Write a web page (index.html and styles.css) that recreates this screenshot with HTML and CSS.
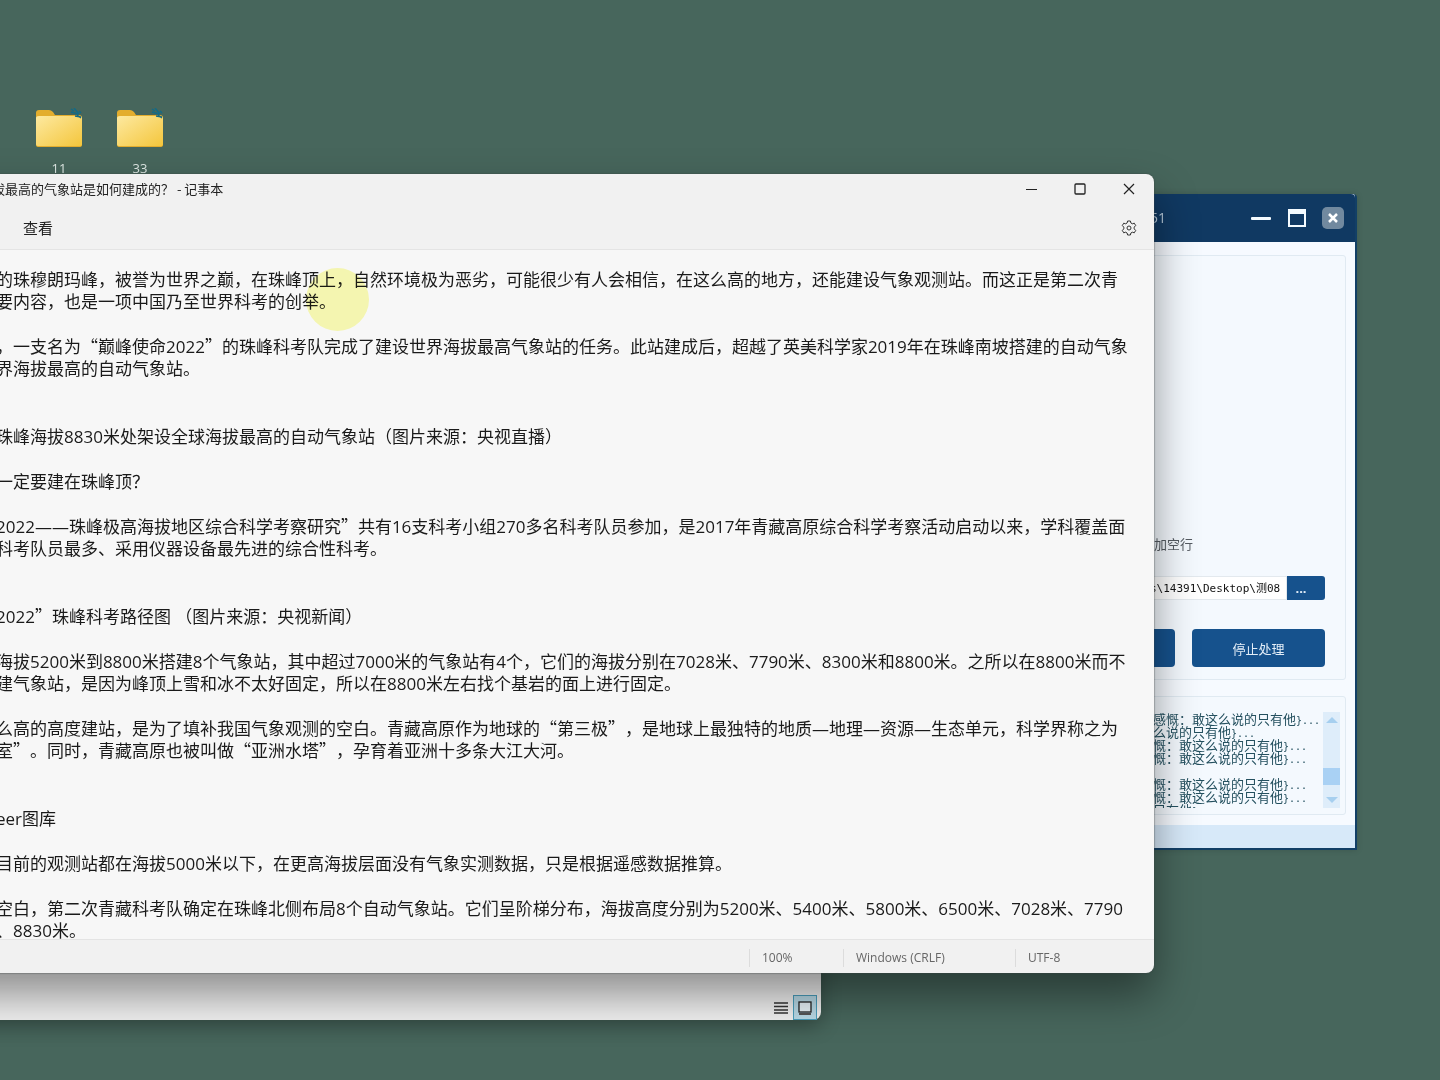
FILE: index.html
```html
<!DOCTYPE html>
<html lang="zh-CN">
<head>
<meta charset="utf-8">
<title>记事本</title>
<link rel="stylesheet" href="styles.css">
</head>
<body>
<main class="desktop">
  <nav class="icons">
    <a class="icon" href="#">
      <svg width="48" height="40" viewBox="0 0 48 40" aria-hidden="true">
        <defs><linearGradient id="fold" x1="0" y1="0" x2="1" y2="1"><stop offset="0" stop-color="#fde9a0"/><stop offset="1" stop-color="#f4c63c"/></linearGradient></defs>
        <path d="M1 5q0-3 3-3h10q2 0 4 2l2 3h24q3 0 3 3v27q0 2-3 2H4q-3 0-3-2z" fill="#e3ad2d"/>
        <path d="M1 10q0-2 3-2h40q3 0 3 2v26q0 2-3 2H4q-3 0-3-2z" fill="url(#fold)"/>
        <path d="M36 1l3 2M39 0l5 6M36 4l7 2M42 7l4 3M44 3l2 2M40 8l6 1" stroke="#146a86" stroke-width="1.500"/>
      </svg>
      <span>11</span>
    </a>
    <a class="icon" href="#">
      <svg width="48" height="40" viewBox="0 0 48 40" aria-hidden="true">
        <path d="M1 5q0-3 3-3h10q2 0 4 2l2 3h24q3 0 3 3v27q0 2-3 2H4q-3 0-3-2z" fill="#e3ad2d"/>
        <path d="M1 10q0-2 3-2h40q3 0 3 2v26q0 2-3 2H4q-3 0-3-2z" fill="url(#fold)"/>
        <path d="M36 1l3 2M39 0l5 6M36 4l7 2M42 7l4 3M44 3l2 2M40 8l6 1" stroke="#146a86" stroke-width="1.500"/>
      </svg>
      <span>33</span>
    </a>
  </nav>

  <section class="window app">
    <header class="app-title">
      <span class="app-name">51</span>
      <button class="app-btn" aria-label="最小化"><svg width="20" height="20" viewBox="0 0 20 20"><rect x="0" y="9" width="20" height="3" rx="1" fill="#f4fbff"/></svg></button>
      <button class="app-btn" aria-label="最大化"><svg width="18" height="18" viewBox="0 0 18 18"><path d="M0 0h18v18H0zM2 5v11h14V5z" fill="#f4fbff" fill-rule="evenodd"/></svg></button>
      <button class="app-btn close" aria-label="关闭"><svg width="10" height="10" viewBox="0 0 10 10"><path d="M1 1l8 8M9 1l-8 8" stroke="#fff" stroke-width="2.500"/></svg></button>
    </header>
    <div class="app-body">
      <div class="panel options">
        <span class="option">加空行</span>
        <div class="path-row">
          <input class="path" type="text" value="s\14391\Desktop\测08" aria-label="路径">
          <button class="primary browse" aria-label="浏览">...</button>
        </div>
        <div class="action-row">
          <button class="primary start" aria-label="开始处理"></button>
          <button class="primary stop">停止处理</button>
        </div>
      </div>
      <div class="panel log-panel">
        <div class="log">
          <div>感慨：敢这么说的只有他<span>}...</span></div>
          <div>么说的只有他<span>}...</span></div>
          <div>慨：敢这么说的只有他<span>}...</span></div>
          <div>慨：敢这么说的只有他<span>}...</span></div>
          <div><br></div>
          <div>慨：敢这么说的只有他<span>}...</span></div>
          <div>慨：敢这么说的只有他<span>}...</span></div>
          <div>只有他<span>}</span></div>
        </div>
        <div class="scroll">
          <svg width="12" height="6" viewBox="0 0 12 6"><path d="M6 0l6 6H0z" fill="#a6cfef"/></svg>
          <div class="thumb"></div>
          <svg width="12" height="6" viewBox="0 0 12 6"><path d="M0 0h12L6 6z" fill="#a6cfef"/></svg>
        </div>
      </div>
    </div>
    <footer class="app-status"></footer>
  </section>

  <section class="window explorer">
    <button class="view" aria-label="详细信息"><svg width="14" height="12" viewBox="0 0 14 12"><path d="M0 1h14M0 4.500h14M0 8h14M0 11h14" stroke="#333" stroke-width="1.500"/></svg></button>
    <button class="view active" aria-label="大图标"><svg width="14" height="14" viewBox="0 0 14 14"><rect x="1" y="1" width="12" height="10" fill="#e8f3f8" stroke="#222" stroke-width="1.300"/><path d="M1 13h12" stroke="#555" stroke-width="2"/></svg></button>
  </section>

  <section class="window notepad">
    <header class="title-bar">
      <h1>拔最高的气象站是如何建成的？ - 记事本</h1>
      <button class="caption" aria-label="最小化"><svg width="12" height="12" viewBox="0 0 12 12"><path d="M1 6.500h11" stroke="#222"/></svg></button>
      <button class="caption" aria-label="最大化"><svg width="12" height="12" viewBox="0 0 12 12"><rect x="1" y="1" width="10" height="10" rx="1" fill="none" stroke="#222" stroke-width="1.300"/></svg></button>
      <button class="caption" aria-label="关闭"><svg width="12" height="12" viewBox="0 0 12 12"><path d="M1 1l10 10M11 1L1 11" stroke="#222" stroke-width="1.200"/></svg></button>
    </header>
    <div class="menu-bar">
      <button class="menu">查看</button>
      <button class="caption" aria-label="设置"><svg width="16" height="16" viewBox="0 0 16 16" fill="none" stroke="#333" stroke-linejoin="round"><path d="M6.600 1h2.800l.5 2 1.400.8 2-.6 1.400 2.400-1.500 1.500v1.800l1.500 1.500-1.400 2.400-2-.6-1.400.8-.5 2H6.600l-.5-2-1.400-.8-2 .6-1.400-2.400 1.500-1.500V7.100L1.300 5.600l1.400-2.400 2 .6L6.100 3z"/><circle cx="8" cy="8" r="2"/></svg></button>
    </div>
    <div class="editor" role="textbox" aria-multiline="true" aria-label="文本编辑器" contenteditable="true" spellcheck="false">
      <p>的珠穆朗玛峰，被誉为世界之巅，在珠峰顶上，自然环境极为恶劣，可能很少有人会相信，在这么高的地方，还能建设气象观测站。而这正是第二次青<br>要内容，也是一项中国乃至世界科考的创举。</p>
      <p class="wide">，一支名为<span class="quote">“</span>巅峰使命2022<span class="quote">”</span>的珠峰科考队完成了建设世界海拔最高气象站的任务。此站建成后，超越了英美科学家2019年在珠峰南坡搭建的自动气象<br>界海拔最高的自动气象站。</p>
      <p>珠峰海拔8830米处架设全球海拔最高的自动气象站（图片来源：央视直播）</p>
      <p>一定要建在珠峰顶？</p>
      <p class="wide">2022——珠峰极高海拔地区综合科学考察研究<span class="quote">”</span>共有16支科考小组270多名科考队员参加，是2017年青藏高原综合科学考察活动启动以来，学科覆盖面<br>科考队员最多、采用仪器设备最先进的综合性科考。</p>
      <p>2022<span class="quote">”</span>珠峰科考路径图 （图片来源：央视新闻）</p>
      <p>海拔5200米到8800米搭建8个气象站，其中超过7000米的气象站有4个，它们的海拔分别在7028米、7790米、8300米和8800米。之所以在8800米而不<br>建气象站，是因为峰顶上雪和冰不太好固定，所以在8800米左右找个基岩的面上进行固定。</p>
      <p class="wide">么高的高度建站，是为了填补我国气象观测的空白。青藏高原作为地球的<span class="quote">“</span>第三极<span class="quote">”</span>，是地球上最独特的地质—地理—资源—生态单元，科学界称之为<br>室<span class="quote">”</span>。同时，青藏高原也被叫做<span class="quote">“</span>亚洲水塔<span class="quote">”</span>，孕育着亚洲十多条大江大河。</p>
      <p>eer图库</p>
      <p>目前的观测站都在海拔5000米以下，在更高海拔层面没有气象实测数据，只是根据遥感数据推算。</p>
      <p>空白，第二次青藏科考队确定在珠峰北侧布局8个自动气象站。它们呈阶梯分布，海拔高度分别为5200米、5400米、5800米、6500米、7028米、7790<br>、8830米。</p>
    </div>
    <footer class="status-bar">
      <span class="zoom">100%</span>
      <span class="eol">Windows (CRLF)</span>
      <span class="encoding">UTF-8</span>
    </footer>
  </section>
  <div class="pointer"></div>
</main>
</body>
</html>
```

FILE: styles.css
```css
* { box-sizing: border-box; }
body {
  margin: 0;
  font-family: "Noto Sans CJK SC", sans-serif;
  text-spacing-trim: space-all;
}
button {
  border: 0;
  padding: 0;
  background: none;
  font: inherit;
  color: inherit;
  display: flex;
  align-items: center;
  justify-content: center;
}
.desktop {
  position: relative;
  min-height: 100vh;
  overflow: hidden;
  background: #47665c;
}
.icons {
  display: flex;
  gap: 33px;
  padding: 108px 0 0 35px;
}
.icon {
  display: flex;
  flex-direction: column;
  align-items: center;
  gap: 10px;
  width: 48px;
  color: #dfe8e4;
  font: 13px/20px "Open Sans", sans-serif;
  text-decoration: none;
}
.window {
  position: absolute;
  display: flex;
  flex-direction: column;
}

.app {
  left: 1100px;
  top: 194px;
  width: 257px;
  height: 656px;
  border: solid #123f66;
  border-width: 0 2px 2px 0;
  border-radius: 4px 4px 0 0;
  background: #f6faff;
  box-shadow: 0 0 6px rgba(0, 0, 0, .15);
}
.app-title {
  display: flex;
  align-items: center;
  gap: 14px;
  height: 48px;
  padding-right: 11px;
  border-radius: 4px 4px 0 0;
  background: #103962;
}
.app-name {
  flex: 1;
  padding-left: 50px;
  color: #b8cadb;
  font: 14px/20px "Open Sans", sans-serif;
}
.app-btn { width: 22px; height: 22px; }
.close { border-radius: 5px; background: #71899f; }
.app-body {
  flex: 1;
  display: flex;
  flex-direction: column;
  gap: 16px;
  padding: 13px 9px 10px 0;
}
.panel {
  border: 1px solid #e0eaf2;
  border-radius: 3px;
  background: #f4f9fe;
}
.options {
  flex: 1;
  display: flex;
  flex-direction: column;
  justify-content: flex-end;
  padding: 0 20px 12px 0;
}
.option {
  padding-left: 53px;
  margin-bottom: 22px;
  color: #555b62;
  font-size: 13px;
  line-height: 20px;
}
.path-row { display: flex; margin-bottom: 29px; }
.path {
  flex: 1;
  min-width: 0;
  height: 24px;
  border: 1px solid #e3e9ee;
  background: #fff;
  padding: 0 0 2px 48px;
  color: #111;
  font: 11px "DejaVu Sans Mono", "Noto Sans CJK SC", monospace;
}
.primary { background: #16528d; color: #e3eef8; }
.browse {
  width: 38px;
  border-radius: 0 3px 3px 0;
  padding-right: 10px;
  font: bold 13px "Open Sans", sans-serif;
}
.action-row { display: flex; justify-content: flex-end; gap: 17px; }
.action-row .primary { height: 38px; border-radius: 4px; font-size: 13px; }
.start { flex: 1; }
.stop { width: 133px; }
.log-panel {
  display: flex;
  height: 119px;
  padding: 15px 5px 6px 0;
}
.log {
  flex: 1;
  overflow: hidden;
  padding-left: 52px;
  color: #24505f;
  font-size: 13px;
  line-height: 13px;
  white-space: nowrap;
}
.log div { height: 13px; }
.log span { font: 10px/13px "DejaVu Sans Mono", monospace; }
.scroll {
  display: flex;
  flex-direction: column;
  align-items: center;
  width: 17px;
  padding: 5px 0;
  background: #deedfa;
}
.thumb { width: 17px; height: 17px; margin: auto 0 12px; background: #a9d1f4; }
.app-status { height: 23px; background: #d7e9f9; }

.explorer {
  left: -120px;
  top: 900px;
  width: 941px;
  height: 120px;
  flex-direction: row;
  justify-content: flex-end;
  align-items: flex-end;
  padding-right: 4px;
  border-radius: 0 0 8px 8px;
  background: #f1f1f1;
  box-shadow: 0 6px 20px rgba(0, 0, 0, .3);
}
.view { width: 24px; height: 25px; border: 1px solid transparent; }
.active { border-color: #4b9fbd; background: #b9dae7; }

.notepad {
  left: -120px;
  top: 174px;
  width: 1274px;
  height: 799px;
  overflow: hidden;
  border-radius: 8px;
  background: #f1f1f1;
  box-shadow: 0 0 1px 1px rgba(60, 70, 70, .3), 0 22px 44px rgba(0, 0, 0, .42);
}
.title-bar, .menu-bar { display: flex; align-items: center; padding-right: 1px; }
.title-bar { height: 30px; }
.title-bar h1 {
  flex: 1;
  margin: 0;
  padding-left: 112px;
  font-size: 13px;
  font-weight: 400;
  line-height: 20px;
  color: #222;
  white-space: nowrap;
}
.caption { width: 49px; height: 30px; }
.menu-bar {
  height: 46px;
  justify-content: space-between;
  padding-top: 3px;
  border-bottom: 1px solid #e4e4e4;
}
.menu { padding-left: 143px; color: #222; font-size: 15px; line-height: 22px; }
.editor {
  flex: 1;
  overflow: hidden;
  padding: 19px 0 0 116px;
  background: #f7f7f7;
  color: #1a1a1a;
  font-family: "Open Sans", "Noto Sans CJK SC", sans-serif;
  font-size: 17px;
  line-height: 22px;
  white-space: nowrap;
  outline: 0;
}
.editor p { margin: 0 0 23px; }
.editor .wide { margin-bottom: 46px; }
.quote { font-family: "Noto Sans CJK SC", sans-serif; line-height: 1; }
.status-bar {
  display: flex;
  justify-content: flex-end;
  align-items: center;
  height: 34px;
  padding-top: 2px;
  border-top: 1px solid #e4e4e4;
  color: #666;
  font: 12px/18px "Open Sans", sans-serif;
}
.status-bar span { padding-left: 12px; border-left: 1px solid #dcdcdc; }
.zoom { width: 94px; }
.eol { width: 172px; }
.encoding { width: 139px; }

.pointer {
  position: absolute;
  left: 306px;
  top: 268px;
  width: 63px;
  height: 63px;
  border-radius: 50%;
  background: #fcfdb6;
  mix-blend-mode: multiply;
  pointer-events: none;
}
```
